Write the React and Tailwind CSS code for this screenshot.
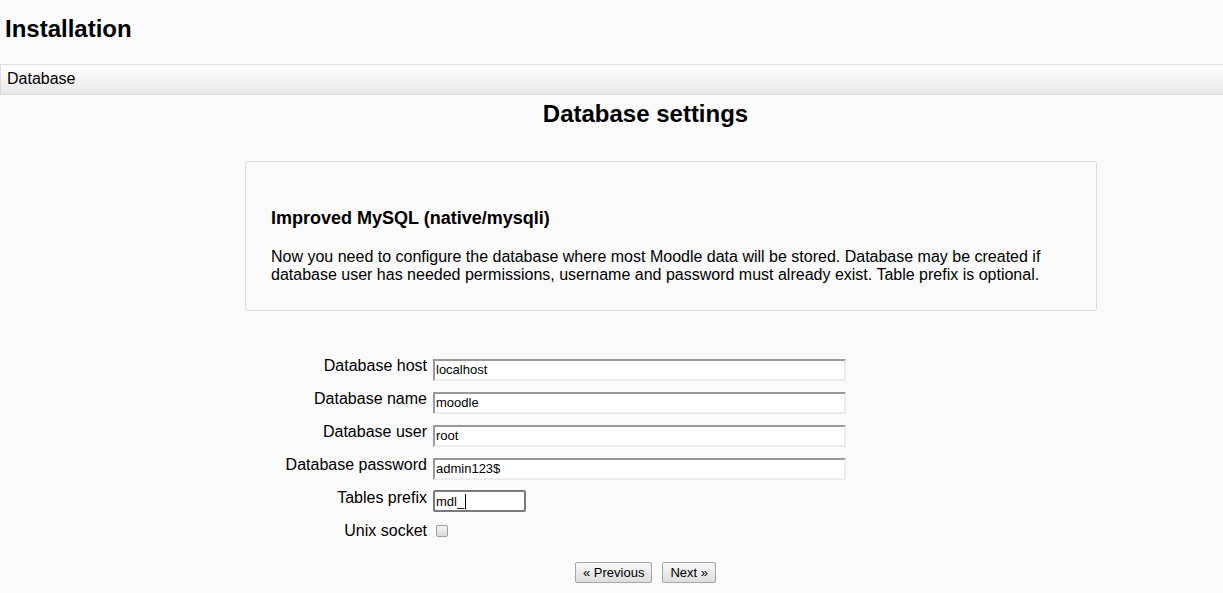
import React from "react";

const fields = [
  { label: "Database host", value: "localhost" },
  { label: "Database name", value: "moodle" },
  { label: "Database user", value: "root" },
  { label: "Database password", value: "admin123$" },
];

export default function App() {
  return (
    <div
      className="min-h-[593px] w-full overflow-hidden bg-[#fafafa] text-black"
      style={{ fontFamily: '"Liberation Sans", Arial, sans-serif' }}
    >
      <h1 className="pt-[15px] pl-[5px] text-[24px] leading-[28px] font-bold">Installation</h1>
      <div className="mt-[21px] h-[31px] border-y border-l border-[#dcdcdc] bg-gradient-to-b from-white to-[#e8e8e8] pl-[6px] pt-[5px] text-[16px] leading-[18px]">
        Database
      </div>
      <h2 className="mt-[5px] pl-[68px] text-center text-[24px] leading-[28px] font-bold">Database settings</h2>
      <div className="mt-[33px] ml-[245px] h-[150px] w-[852px] rounded-[3px] border border-[#dddddd] px-[25px] pt-[46px]">
        <h3 className="text-[18px] leading-[21px] font-bold">Improved MySQL (native/mysqli)</h3>
        <p className="mt-[19px] text-[16px] leading-[18.4px]">
          Now you need to configure the database where most Moodle data will be stored. Database may be created if
          database user has needed permissions, username and password must already exist. Table prefix is optional.
        </p>
      </div>
      <div className="mt-[45px] flex flex-col">
        {fields.map((f) => (
          <div key={f.label} className="flex h-[33px] items-start">
            <div className="w-[427px] pt-[1px] text-right text-[16px] leading-[18px]">{f.label}</div>
            <div className="ml-[6px] mt-[3px] h-[22px] w-[413px] border-2 border-t-[#999999] border-l-[#999999] border-r-[#ececec] border-b-[#ececec] bg-white pl-[1px] text-[13px] leading-[17px]">
              {f.value}
            </div>
          </div>
        ))}
        <div className="flex h-[33px] items-start">
          <div className="w-[427px] pt-[1px] text-right text-[16px] leading-[18px]">Tables prefix</div>
          <div className="ml-[6px] mt-[2px] flex h-[22px] w-[93px] items-center rounded-[2px] border-2 border-[#7a7a7a] bg-white pl-[1px] text-[13px] leading-[17px]">
            <span>mdl_</span>
            <span className="ml-[1px] h-[15px] w-[1px] bg-black" />
          </div>
        </div>
        <div className="flex h-[33px] items-start">
          <div className="w-[427px] pt-[1px] text-right text-[16px] leading-[18px]">Unix socket</div>
          <div className="ml-[9px] mt-[4px] h-[12px] w-[12px] rounded-[2px] border border-[#a0a0a0] bg-gradient-to-b from-[#f4f4f4] to-[#dcdcdc]" />
        </div>
      </div>
      <div className="mt-[8px] flex justify-center gap-[10px] pl-[68px]">
        <button className="h-[21px] rounded-[2px] border border-[#a6a6a6] bg-gradient-to-b from-[#f8f8f8] to-[#dddddd] px-[7px] text-[13px] leading-[15px] text-black" style={{ fontFamily: '"Liberation Sans", Arial, sans-serif' }}>
          « Previous
        </button>
        <button className="h-[21px] rounded-[2px] border border-[#a6a6a6] bg-gradient-to-b from-[#f8f8f8] to-[#dddddd] px-[7px] text-[13px] leading-[15px] text-black" style={{ fontFamily: '"Liberation Sans", Arial, sans-serif' }}>
          Next »
        </button>
      </div>
    </div>
  );
}
